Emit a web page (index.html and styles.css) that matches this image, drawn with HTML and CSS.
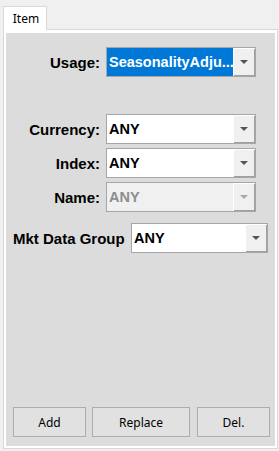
FILE: index.html
```html
<!DOCTYPE html>
<html>
<head>
<meta charset="utf-8">
<link rel="stylesheet" href="styles.css">
</head>
<body>
<div class="tabs">
  <div class="tab">Item</div>
  <div class="panel">
    <div class="inner">
      <div class="row usage">
        <span class="lbl">Usage:</span>
        <div class="combo"><span class="val selected">SeasonalityAdju...</span><span class="btn"><i class="arrow"></i></span></div>
      </div>
      <div class="row currency">
        <span class="lbl">Currency:</span>
        <div class="combo"><span class="val">ANY</span><span class="btn"><i class="arrow"></i></span></div>
      </div>
      <div class="row stacked">
        <span class="lbl">Index:</span>
        <div class="combo"><span class="val">ANY</span><span class="btn"><i class="arrow"></i></span></div>
      </div>
      <div class="row stacked">
        <span class="lbl">Name:</span>
        <div class="combo disabled"><span class="val">ANY</span><span class="btn"><i class="arrow"></i></span></div>
      </div>
      <div class="row mkt">
        <span class="lbl-free">Mkt Data Group</span>
        <div class="combo wide"><span class="val">ANY</span><span class="btn"><i class="arrow"></i></span></div>
      </div>
      <div class="buttons">
        <button class="b small">Add</button>
        <button class="b mid">Replace</button>
        <button class="b small last">Del.</button>
      </div>
    </div>
  </div>
</div>
</body>
</html>
```

FILE: styles.css
```css
html, body {
  margin: 0;
  padding: 0;
}
body {
  width: 279px;
  height: 451px;
  background: #f0f0f0;
  font-family: "Liberation Sans", Arial, sans-serif;
  overflow: hidden;
}
.tabs {
  padding: 6px 0 0 3px;
}
.tab {
  position: relative;
  z-index: 1;
  box-sizing: border-box;
  width: 44px;
  height: 24px;
  margin-bottom: -1px;
  padding-left: 2px;
  border: 1px solid #d9d9d9;
  border-bottom: none;
  background: #ffffff;
  font-family: "Noto Sans", sans-serif;
  font-size: 12px;
  color: #000;
  display: flex;
  align-items: center;
  justify-content: center;
}
.panel {
  box-sizing: border-box;
  width: 275px;
  height: 420px;
  border: 1px solid #d9d9d9;
  background: #ffffff;
  padding: 3px 2px 2px 2px;
}
.inner {
  height: 100%;
  background: #dcdcdc;
  display: flex;
  flex-direction: column;
}
.row {
  display: flex;
  align-items: center;
  height: 30px;
  flex: none;
}
.usage { margin-top: 14px; }
.currency { margin-top: 37px; }
.stacked { margin-top: 4px; }
.mkt {
  margin-top: 11px;
  padding: 0 7px;
}
.lbl {
  box-sizing: border-box;
  width: 100px;
  padding-right: 6px;
  text-align: right;
  font-weight: bold;
  font-size: 15px;
  color: #000;
}
.lbl-free {
  font-weight: bold;
  font-size: 15px;
  color: #000;
  white-space: nowrap;
}
.combo {
  box-sizing: border-box;
  width: 150px;
  height: 30px;
  border: 1px solid #a6a6a6;
  background: #ffffff;
  display: flex;
}
.combo.wide {
  width: 137px;
  margin-left: auto;
}
.val {
  flex: 1;
  min-width: 0;
  padding-left: 2px;
  display: flex;
  align-items: center;
  overflow: hidden;
  white-space: nowrap;
  font-weight: bold;
  font-size: 14.5px;
  color: #000;
}
.val.selected {
  background: #0078d7;
  color: #ffffff;
}
.btn {
  width: 22px;
  flex: none;
  background: #f0f0f0;
  box-shadow: inset 1px 1px #ffffff, inset -1px -1px #a0a0a0;
  display: flex;
  align-items: center;
  justify-content: center;
}
.arrow {
  width: 0;
  height: 0;
  border-left: 4px solid transparent;
  border-right: 4px solid transparent;
  border-top: 4px solid #555555;
}
.combo.disabled {
  background: #f0f0f0;
}
.combo.disabled .val {
  color: #8d8d8d;
}
.combo.disabled .arrow {
  border-top-color: #a8a8a8;
}
.buttons {
  margin-top: auto;
  margin-bottom: 9px;
  padding: 0 5px 0 7px;
  display: flex;
  gap: 6px;
}
.b {
  box-sizing: border-box;
  height: 30px;
  border: 1px solid #adadad;
  background: #e1e1e1;
  font-family: "Noto Sans", sans-serif;
  font-size: 12px;
  color: #000;
  padding: 0;
  margin: 0;
}
.b.small { width: 73px; }
.b.mid { width: 98px; }
.b.last { margin-left: 1px; }
```
